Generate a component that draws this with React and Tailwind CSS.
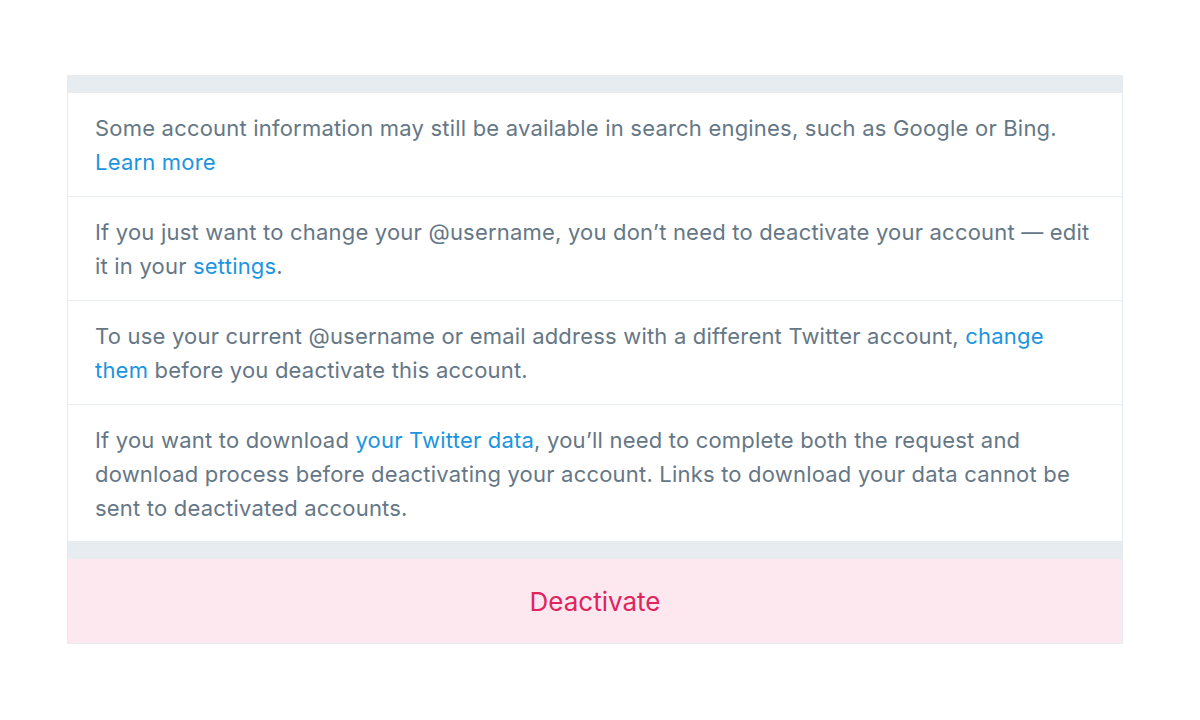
import React from 'react'

const Link = ({ children }) => (
  <a href="#" className="text-[#1b95e0] no-underline">{children}</a>
)

const rows = [
  <>Some account information may still be available in search engines, such as Google or Bing.<br /><Link>Learn more</Link></>,
  <>If you just want to change your @username, you don’t need to deactivate your account — edit<br />it in your <Link>settings</Link>.</>,
  <>To use your current @username or email address with a different Twitter account, <Link>change</Link><br /><Link>them</Link> before you deactivate this account.</>,
  <>If you want to download <Link>your Twitter data</Link>, you’ll need to complete both the request and<br />download process before deactivating your account. Links to download your data cannot be<br />sent to deactivated accounts.</>,
]

const App = () => {
  return (
    <div className="w-[1200px] h-[720px] bg-white pt-[75px] pl-[67px]" style={{ fontFamily: 'Inter, "Noto Sans", sans-serif' }}>
      <div className="w-[1056px] border border-[#e6ecf0] border-t-0">
        <div className="h-[18px] bg-[#e6ecf0]" />
        {rows.map((row, i) => (
          <div key={i} className={`px-[27px] pt-[18px] border-b border-[#e6ecf0] text-[22px] leading-[34px] tracking-[0.2px] text-[#657786] whitespace-nowrap ${i === rows.length - 1 ? 'pb-[16px]' : 'pb-[17px]'}`}>
            {row}
          </div>
        ))}
        <div className="h-[17px] bg-[#e6ecf0]" />
        <button className="w-full h-[84px] bg-[#fce8ee] text-[#e0245e] text-[26px] flex items-center justify-center">
          Deactivate
        </button>
      </div>
    </div>
  )
}

export default App
